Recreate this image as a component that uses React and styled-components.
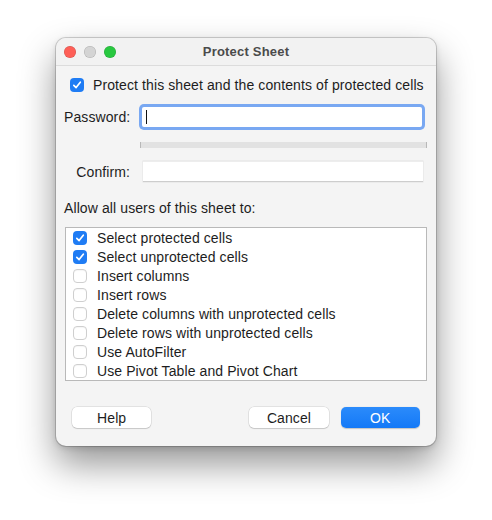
import styled, { createGlobalStyle } from "styled-components";

const GlobalStyle = createGlobalStyle`
    html, body {
        margin: 0;
        background: #ffffff;
    }
    body {
        font-family: "Liberation Sans", Arial, sans-serif;
        font-size: 14px;
        letter-spacing: 0.1px;
        color: #1d1d1d;
    }
`;

// ===== Window chrome =====
const Stage = styled.div`
    padding: 38px 0 80px 56px;
`;

const Window = styled.div`
    width: 380px;
    height: 408px;
    background: #f4f4f4;
    border-radius: 10px;
    box-shadow: 0 0 0 1px rgba(0, 0, 0, 0.16), 0 18px 36px rgba(0, 0, 0, 0.42),
        0 2px 6px rgba(0, 0, 0, 0.14);
    display: flex;
    flex-direction: column;
    overflow: hidden;
`;

const TitleBar = styled.div`
    height: 27px;
    border-bottom: 1px solid #dcdcdc;
    display: grid;
    grid-template-columns: 1fr auto 1fr;
    align-items: center;
    background: #f2f2f2;
`;

const Lights = styled.div`
    display: flex;
    gap: 8px;
    padding-left: 8px;
`;

const Light = styled.span`
    width: 12px;
    height: 12px;
    border-radius: 50%;
    background: ${(p) => p.$color};
    box-shadow: inset 0 0 0 0.5px rgba(0, 0, 0, 0.18);
`;

const Title = styled.div`
    font-weight: bold;
    font-size: 13px;
    letter-spacing: 0.2px;
    color: #4b4b4b;
`;

const Body = styled.div`
    display: flex;
    flex-direction: column;
    flex: 1;
`;

// ===== Checkbox =====
const Box = styled.span`
    width: 14px;
    height: 14px;
    flex: none;
    box-sizing: border-box;
    border-radius: 4px;
    display: inline-flex;
    align-items: center;
    justify-content: center;
    background: ${(p) => (p.$checked ? "#1f7cf4" : "#ffffff")};
    border: ${(p) => (p.$checked ? "none" : "1px solid #cfcfcf")};
    box-shadow: ${(p) => (p.$checked ? "none" : "inset 0 1px 1px rgba(0,0,0,0.04)")};
`;

function Check({ checked }) {
    return (
        <Box $checked={checked}>
            {checked && (
                <svg width="10" height="10" viewBox="0 0 10 10">
                    <path
                        d="M1.8 5.3 L4.1 7.6 L8.3 2.2"
                        fill="none"
                        stroke="#fff"
                        strokeWidth="1.7"
                        strokeLinecap="round"
                        strokeLinejoin="round"
                    />
                </svg>
            )}
        </Box>
    );
}

const ProtectRow = styled.label`
    display: flex;
    align-items: center;
    gap: 9px;
    height: 18px;
    margin: 10px 0 0 14px;
`;

// ===== Password fields =====
const FieldRow = styled.div`
    display: flex;
    align-items: center;
    gap: ${(p) => p.$gap}px;
    margin-top: ${(p) => p.$top}px;
    height: ${(p) => p.$height}px;
`;

const Label = styled.span`
    width: 66px;
    margin-left: 8px;
    text-align: right;
    white-space: nowrap;
`;

const Field = styled.div`
    width: 280px;
    height: 100%;
    box-sizing: border-box;
    background: #ffffff;
    display: flex;
    align-items: center;
    padding-left: 4px;
    ${(p) =>
        p.$focused
            ? "box-shadow: 0 0 0 3px #79a8f2; border-radius: 2px;"
            : "border-top: 1px solid #ededed; border-bottom: 1px solid #cdcdcd; box-shadow: 0 0 0 0.5px #e2e2e2;"}
`;

const Caret = styled.span`
    width: 1px;
    height: 14px;
    background: #111;
`;

const Strength = styled.div`
    width: 287px;
    height: 6px;
    margin: 15px 0 0 84px;
    box-sizing: border-box;
    background: #e2e2e2;
    border-left: 1px solid #b8b8b8;
    border-right: 1px solid #b8b8b8;
`;

// ===== Permissions list =====
const SectionLabel = styled.div`
    margin: 18px 0 0 8px;
    height: 16px;
    line-height: 16px;
`;

const List = styled.div`
    margin: 11px 0 0 9px;
    width: 362px;
    box-sizing: border-box;
    background: #ffffff;
    border: 1px solid #b9b9b9;
`;

const Item = styled.label`
    height: 19px;
    display: flex;
    align-items: center;
    gap: 10px;
    padding-left: 7px;
`;

// ===== Buttons =====
const Footer = styled.div`
    display: flex;
    align-items: center;
    margin-top: 26px;
    padding: 0 16px;
`;

const Button = styled.button`
    width: 80px;
    height: 21px;
    border: none;
    border-radius: 5px;
    font-family: inherit;
    font-size: 14px;
    letter-spacing: 0.1px;
    padding: 0;
    margin-left: ${(p) => p.$ml || 0}px;
    color: ${(p) => (p.$primary ? "#ffffff" : "#1d1d1d")};
    background: ${(p) => (p.$primary ? "linear-gradient(#2b8bfb, #1479f7)" : "#ffffff")};
    box-shadow: ${(p) =>
        p.$primary
            ? "0 0.5px 1px rgba(0,0,0,0.2)"
            : "0 0 0 0.5px rgba(0,0,0,0.14), 0 1px 1px rgba(0,0,0,0.12)"};
`;

const permissions = [
    { text: "Select protected cells", checked: true },
    { text: "Select unprotected cells", checked: true },
    { text: "Insert columns" },
    { text: "Insert rows" },
    { text: "Delete columns with unprotected cells" },
    { text: "Delete rows with unprotected cells" },
    { text: "Use AutoFilter" },
    { text: "Use Pivot Table and Pivot Chart" },
];

export default function App() {
    return (
        <Stage>
            <GlobalStyle />
            <Window>
                <TitleBar>
                    <Lights>
                        <Light $color="#fe5f57" />
                        <Light $color="#d4d4d4" />
                        <Light $color="#28c840" />
                    </Lights>
                    <Title>Protect Sheet</Title>
                    <span />
                </TitleBar>

                <Body>
                    <ProtectRow>
                        <Check checked />
                        Protect this sheet and the contents of protected cells
                    </ProtectRow>

                    <FieldRow $top={13} $height={20} $gap={12}>
                        <Label>Password:</Label>
                        <Field $focused>
                            <Caret />
                        </Field>
                    </FieldRow>

                    <Strength />

                    <FieldRow $top={13} $height={21} $gap={13}>
                        <Label>Confirm:</Label>
                        <Field />
                    </FieldRow>

                    <SectionLabel>Allow all users of this sheet to:</SectionLabel>

                    <List>
                        {permissions.map((p) => (
                            <Item key={p.text}>
                                <Check checked={p.checked} />
                                {p.text}
                            </Item>
                        ))}
                    </List>

                    <Footer>
                        <Button>Help</Button>
                        <Button $ml={98}>Cancel</Button>
                        <Button $primary $ml={12}>
                            OK
                        </Button>
                    </Footer>
                </Body>
            </Window>
        </Stage>
    );
}
